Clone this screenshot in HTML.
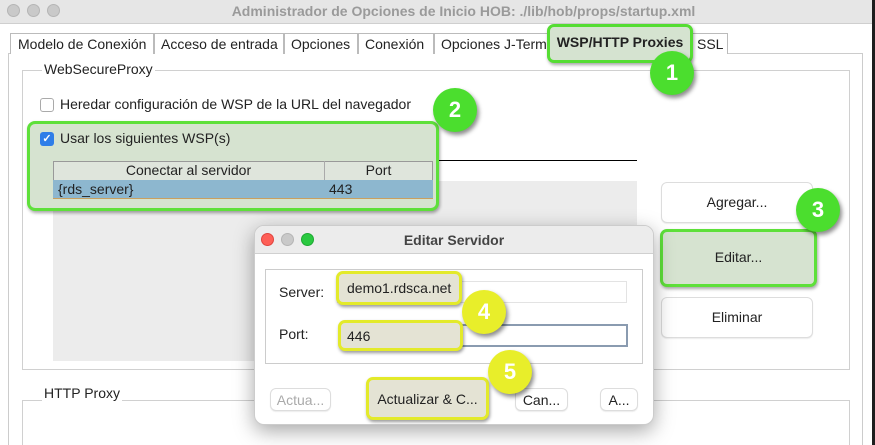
<!DOCTYPE html><html><head><style>
*{box-sizing:border-box}html,body{margin:0;width:875px;height:445px;overflow:hidden}body{background:#1e1e1e;font-family:"Liberation Sans",sans-serif;font-size:14px;color:#222;position:relative}
.a{position:absolute}
.win{left:0;top:0;width:872px;height:445px;background:#fff}
.tb{left:0;top:0;width:872px;height:24px;background:#e6e6e6;border-bottom:1px solid #cfcfcf}
.dot{width:13px;height:13px;border-radius:50%;background:#c9c9c9;border:1px solid #b5b5b5}
.tab{top:33px;height:21px;border:1px solid #bbb;border-bottom:none;background:#fff;padding:2px 6px;white-space:nowrap;overflow:hidden}
.box{border:1px solid #d0d0d0}
.lbl{background:#fff;padding:0 2px}
.badge{border-radius:50%;color:#fff;font-weight:bold;font-size:22px;text-align:center;box-shadow:2px 3px 4px rgba(0,0,0,.45)}
.g{background:#4bde2e}.y{background:#e8ee2a}
.btn{background:#fff;border:1px solid #ddd;border-radius:6px;text-align:center;box-shadow:0 1px 1px rgba(0,0,0,.08)}
.hy{border:3px solid #e3ea2a;border-radius:7px;background:#e4e3d4;box-shadow:1px 2px 3px rgba(0,0,0,.4)}
</style></head><body>
<div class="a win"></div>
<div class="a tb"></div>
<div class="a dot" style="left:7px;top:4px"></div><div class="a dot" style="left:27px;top:4px"></div><div class="a dot" style="left:47px;top:4px"></div>
<div class="a" style="left:0;width:872px;top:3px;text-align:center;padding-left:55px;font-weight:bold;color:#9a9a9a">Administrador de Opciones de Inicio HOB: ./lib/hob/props/startup.xml</div>
<div class="a" style="left:8px;top:53px;width:855px;height:400px;border:1px solid #ccc"></div>
<div class="a tab" style="left:10px;width:144px;padding-left:7px">Modelo de Conexión</div>
<div class="a tab" style="left:154px;width:130px">Acceso de entrada</div>
<div class="a tab" style="left:284px;width:74px">Opciones</div>
<div class="a tab" style="left:358px;width:76px">Conexión</div>
<div class="a tab" style="left:434px;width:116px">Opciones J-Term</div>
<div class="a tab" style="left:690px;width:38px">SSL</div>
<div class="a" style="left:547px;top:24px;width:146px;height:39px;border:3px solid #55dd33;border-radius:7px;background:#d5e3d0;font-weight:bold;text-align:center;padding-top:7px;box-shadow:1px 2px 3px rgba(0,0,0,.35)">WSP/HTTP Proxies</div>
<div class="a box" style="left:22px;top:70px;width:828px;height:300px"></div>
<div class="a lbl" style="left:42px;top:61px">WebSecureProxy</div>
<div class="a" style="left:40px;top:98px;width:14px;height:14px;border:1px solid #aaa;border-radius:3px;background:#fff"></div>
<div class="a" style="left:60px;top:96px">Heredar configuración de WSP de la URL del navegador</div>
<div class="a" style="left:53px;top:181px;width:584px;height:180px;background:#ececec"></div>
<div class="a" style="left:433px;top:160px;width:204px;height:1px;background:#000"></div>
<div class="a" style="left:27px;top:121px;width:412px;height:90px;border:3px solid #5ee03a;border-radius:8px;background:#d6e3d0;box-shadow:1px 2px 3px rgba(0,0,0,.35)"></div>
<div class="a" style="left:40px;top:132px;width:14px;height:14px;border-radius:3px;background:#2f7ee8;color:#fff;font-size:11px;line-height:14px;text-align:center;font-weight:bold">✓</div>
<div class="a" style="left:60px;top:130px">Usar los siguientes WSP(s)</div>
<div class="a" style="left:53px;top:161px;width:380px;height:19px;background:#dfe5dc;border:1px solid #999;border-bottom:none"></div>
<div class="a" style="left:324px;top:161px;width:1px;height:19px;background:#aaa"></div>
<div class="a" style="left:53px;top:162px;width:271px;text-align:center">Conectar al servidor</div>
<div class="a" style="left:324px;top:162px;width:109px;text-align:center">Port</div>
<div class="a" style="left:53px;top:180px;width:380px;height:19px;background:#8db7cf;border-bottom:1px solid #c9a060"></div>
<div class="a" style="left:58px;top:181px">{rds_server}</div><div class="a" style="left:329px;top:181px">443</div>
<div class="a btn" style="left:661px;top:182px;width:152px;height:41px;padding-top:11px">Agregar...</div>
<div class="a" style="left:660px;top:229px;width:157px;height:58px;border:3px solid #5ee03a;border-radius:7px;background:#d6e3d0;text-align:center;padding-top:17px;box-shadow:1px 2px 3px rgba(0,0,0,.35)">Editar...</div>
<div class="a btn" style="left:661px;top:297px;width:152px;height:41px;padding-top:11px">Eliminar</div>
<div class="a box" style="left:22px;top:400px;width:828px;height:60px"></div>
<div class="a lbl" style="left:42px;top:385px">HTTP Proxy</div>
<div class="a" style="left:254px;top:225px;width:400px;height:200px;background:#fff;border:1px solid #ccc;border-radius:10px;box-shadow:0 6px 20px rgba(0,0,0,.35);overflow:hidden">
<div style="height:28px;background:#ececec;border-bottom:1px solid #d0d0d0;text-align:center;padding-top:6px;font-weight:bold;color:#444">Editar Servidor</div></div>
<div class="a dot" style="left:261px;top:233px;background:#fe5f57;border-color:#e0443e"></div>
<div class="a dot" style="left:281px;top:233px"></div>
<div class="a dot" style="left:301px;top:233px;background:#2ac940;border-color:#1ea832"></div>
<div class="a" style="left:265px;top:269px;width:378px;height:95px;border:1px solid #ccc"></div>
<div class="a" style="left:279px;top:284px">Server:</div>
<div class="a" style="left:337px;top:281px;width:290px;height:22px;border:1px solid #e3e3e3"></div>
<div class="a hy" style="left:336px;top:271px;width:126px;height:34px;padding:6px 0 0 8px">demo1.rdsca.net</div>
<div class="a" style="left:279px;top:326px">Port:</div>
<div class="a" style="left:340px;top:324px;width:288px;height:23px;border:2px solid #8a9bb0"></div>
<div class="a hy" style="left:338px;top:320px;width:125px;height:31px;padding:5px 0 0 6px">446</div>
<div class="a btn" style="left:270px;top:388px;width:61px;height:23px;padding-top:3px;color:#aaa">Actua...</div>
<div class="a hy" style="left:366px;top:377px;width:123px;height:43px;padding-top:11px;text-align:center">Actualizar &amp; C...</div>
<div class="a btn" style="left:515px;top:388px;width:53px;height:23px;padding-top:3px">Can...</div>
<div class="a btn" style="left:600px;top:388px;width:38px;height:23px;padding-top:3px">A...</div>
<div class="a badge g" style="left:650px;top:51px;width:44px;height:44px;line-height:44px">1</div>
<div class="a badge g" style="left:433px;top:88px;width:44px;height:44px;line-height:44px">2</div>
<div class="a badge g" style="left:796px;top:188px;width:44px;height:44px;line-height:44px">3</div>
<div class="a badge y" style="left:462px;top:290px;width:44px;height:44px;line-height:44px">4</div>
<div class="a badge y" style="left:488px;top:350px;width:44px;height:44px;line-height:44px">5</div>
</body></html>
